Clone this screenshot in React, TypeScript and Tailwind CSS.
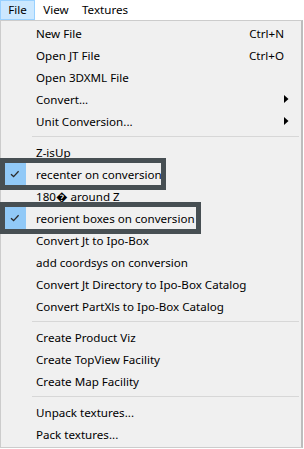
import React from 'react'

type Item =
  | { kind: 'sep' }
  | { kind: 'item'; label: string; shortcut?: string; sub?: boolean; checked?: boolean; boxW?: number }

const items: Item[] = [
  { kind: 'item', label: 'New File', shortcut: 'Ctrl+N' },
  { kind: 'item', label: 'Open JT File', shortcut: 'Ctrl+O' },
  { kind: 'item', label: 'Open 3DXML File' },
  { kind: 'item', label: 'Convert...', sub: true },
  { kind: 'item', label: 'Unit Conversion...', sub: true },
  { kind: 'sep' },
  { kind: 'item', label: 'Z-isUp' },
  { kind: 'item', label: 'recenter on conversion', checked: true, boxW: 166 },
  { kind: 'item', label: '180\uFFFD around Z' },
  { kind: 'item', label: 'reorient boxes on conversion', checked: true, boxW: 201 },
  { kind: 'item', label: 'Convert Jt to Ipo-Box' },
  { kind: 'item', label: 'add coordsys on conversion' },
  { kind: 'item', label: 'Convert Jt Directory to Ipo-Box Catalog' },
  { kind: 'item', label: 'Convert PartXls to Ipo-Box Catalog' },
  { kind: 'sep' },
  { kind: 'item', label: 'Create Product Viz' },
  { kind: 'item', label: 'Create TopView Facility' },
  { kind: 'item', label: 'Create Map Facility' },
  { kind: 'sep' },
  { kind: 'item', label: 'Unpack textures...' },
  { kind: 'item', label: 'Pack textures...' },
]

function Check() {
  return (
    <svg width="10" height="8" viewBox="0 0 10 8" className="block">
      <path d="M1 4.2 L3.6 6.6 L8.6 1.2" fill="none" stroke="#2b2b2b" strokeWidth="1.3" />
    </svg>
  )
}

function Arrow() {
  return (
    <svg width="5" height="8" viewBox="0 0 5 8" className="block">
      <path d="M0 0 L4.5 4 L0 8 Z" fill="#000" />
    </svg>
  )
}

export default function App() {
  return (
    <div
      className="w-[304px] h-[449px] bg-white text-[11.6px] text-black overflow-hidden"
      style={{ fontFamily: '"Noto Sans", "DejaVu Sans", sans-serif' }}
    >
      {/* menu bar */}
      <div className="h-[20px] flex items-stretch">
        <div className="w-[35px] flex items-center justify-center bg-[#cce8ff] border border-[#99d1ff]">File</div>
        <div className="w-[42px] flex items-center justify-center">View</div>
        <div className="w-[56px] flex items-center justify-center">Textures</div>
      </div>

      {/* dropdown */}
      <div className="w-[303px] h-[428px] bg-[#f0f0f0] border border-[#cccccc] border-r-2 border-r-[#bdbdbd] py-[1px] flex flex-col">
        {items.map((it, i) =>
          it.kind === 'sep' ? (
            <div key={i} className="h-[9px] flex items-center pl-[31px] pr-[2px]">
              <div className="h-px w-full bg-[#d7d7d7]" />
            </div>
          ) : (
            <div key={i} className="relative h-[22px] flex items-center shrink-0">
              <div className="w-[35px] pl-[3px] h-full flex items-center">
                {it.checked && (
                  <div className="w-[22px] h-full bg-[#91c9f7] flex items-center justify-center">
                    <Check />
                  </div>
                )}
              </div>
              <span className="flex-1 whitespace-nowrap pt-[2px]">{it.label}</span>
              {it.shortcut && <span className="pr-[17px] pt-[2px]">{it.shortcut}</span>}
              {it.sub && (
                <span className="pr-[12px]">
                  <Arrow />
                </span>
              )}
              {it.boxW && (
                <span
                  className="absolute left-[-1px] top-[-5px] h-[32px] border-[5px] border-[#474f53] pointer-events-none"
                  style={{ width: it.boxW }}
                />
              )}
            </div>
          )
        )}
      </div>
    </div>
  )
}
